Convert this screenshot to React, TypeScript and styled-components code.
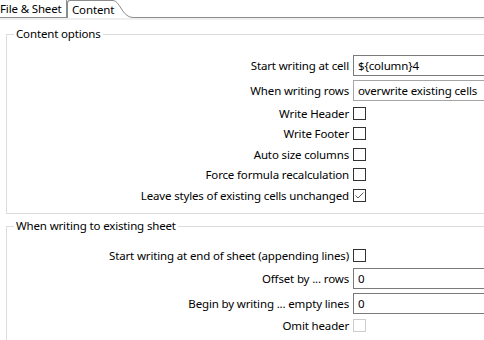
import React from 'react'
import styled, { createGlobalStyle } from 'styled-components'

const GlobalStyle = createGlobalStyle`
  html, body {
    margin: 0;
    padding: 0;
    background: #ffffff;
  }
  body {
    font-family: 'Noto Sans', 'DejaVu Sans', sans-serif;
    font-size: 11.5px;
    letter-spacing: -0.15px;
    color: #000000;
  }
`

const Page = styled.div`
  width: 484px;
  height: 340px;
  overflow: hidden;
  background: #ffffff;
`

const TabBar = styled.div`
  display: flex;
  height: 18px;
`

const Tab = styled.div<{ $active?: boolean }>`
  display: flex;
  align-items: center;
  box-sizing: border-box;
  height: 18px;
  padding: ${(p) => (p.$active ? '0 0 0 4px' : '0 4px 0 0')};
  white-space: nowrap;
  border-top: ${(p) => (p.$active ? '1px solid #8c8c8c' : 'none')};
  border-left: ${(p) => (p.$active ? '1px solid #8c8c8c' : 'none')};
  border-right: ${(p) => (p.$active ? 'none' : '1px solid #8c8c8c')};
  border-bottom: ${(p) => (p.$active ? 'none' : '1px solid #8c8c8c')};
  border-top-left-radius: ${(p) => (p.$active ? '3px' : '0')};
  width: ${(p) => (p.$active ? '46px' : '67px')};
`

const TabCurve = styled.svg`
  display: block;
  flex: none;
`

const TabFill = styled.div`
  flex: 1;
  box-sizing: border-box;
  border-bottom: 1px solid #8c8c8c;
`

const TabBand = styled.div`
  height: 2px;
  background: #f0f0f0;
`

const Body = styled.div`
  padding: 6px 0 0 6px;
`

const Group = styled.fieldset<{ $gap?: number }>`
  margin: ${(p) => p.$gap ?? 0}px 0 0 0;
  padding: 11px 0 7.5px 0;
  min-width: 0;
  width: 520px;
  box-sizing: border-box;
  border: 1px solid #dcdcdc;
`

const Legend = styled.legend`
  margin-left: 7px;
  padding: 0 2px;
  line-height: 16px;
`

const Row = styled.div<{ $h: number }>`
  display: flex;
  align-items: center;
  height: ${(p) => p.$h}px;
  gap: 4px;
`

const Label = styled.div`
  width: 342px;
  flex: none;
  text-align: right;
  white-space: nowrap;
`

const TextBox = styled.div<{ $light?: boolean }>`
  box-sizing: border-box;
  width: 150px;
  height: 21px;
  padding: 0 4px;
  display: flex;
  align-items: center;
  border: 1px solid ${(p) => (p.$light ? '#a5a5a5' : '#7a7a7a')};
  background: #ffffff;
  white-space: nowrap;
`

const Box = styled.div<{ $disabled?: boolean }>`
  box-sizing: border-box;
  width: 13px;
  height: 13px;
  border: 1px solid ${(p) => (p.$disabled ? '#cccccc' : '#333333')};
  background: #ffffff;
  display: flex;
  align-items: center;
  justify-content: center;
`

const Check = ({ checked, disabled }: { checked?: boolean; disabled?: boolean }) => (
  <Box $disabled={disabled}>
    {checked && (
      <svg width="11" height="11" viewBox="0 0 11 11">
        <polyline points="1.5,5.5 4,8 9.5,2.5" fill="none" stroke="#5a5a5a" strokeWidth="1" />
      </svg>
    )}
  </Box>
)

const InputRow = ({ label, value, light }: { label: string; value: string; light?: boolean }) => (
  <Row $h={25}>
    <Label>{label}</Label>
    <TextBox $light={light}>{value}</TextBox>
  </Row>
)

const CheckRow = ({ label, checked, disabled }: { label: string; checked?: boolean; disabled?: boolean }) => (
  <Row $h={20.5}>
    <Label>{label}</Label>
    <Check checked={checked} disabled={disabled} />
  </Row>
)

export default function App() {
  return (
    <Page>
      <GlobalStyle />
      <TabBar>
        <Tab>File &amp; Sheet</Tab>
        <Tab $active>Content</Tab>
        <TabCurve width="20" height="18" viewBox="0 0 20 18">
          <path d="M0 0.5 C 7 0.5, 9 17.5, 20 17.5" fill="none" stroke="#8c8c8c" strokeWidth="1" />
        </TabCurve>
        <TabFill />
      </TabBar>
      <TabBand />
      <Body>
        <Group>
          <Legend>Content options</Legend>
          <InputRow label="Start writing at cell" value="${column}4" />
          <InputRow label="When writing rows" value="overwrite existing cells" light />
          <CheckRow label="Write Header" />
          <CheckRow label="Write Footer" />
          <CheckRow label="Auto size columns" />
          <CheckRow label="Force formula recalculation" />
          <CheckRow label="Leave styles of existing cells unchanged" checked />
        </Group>
        <Group $gap={4}>
          <Legend>When writing to existing sheet</Legend>
          <CheckRow label="Start writing at end of sheet (appending lines)" />
          <InputRow label="Offset by ... rows" value="0" />
          <InputRow label="Begin by writing ... empty lines" value="0" />
          <CheckRow label="Omit header" disabled />
        </Group>
      </Body>
    </Page>
  )
}
